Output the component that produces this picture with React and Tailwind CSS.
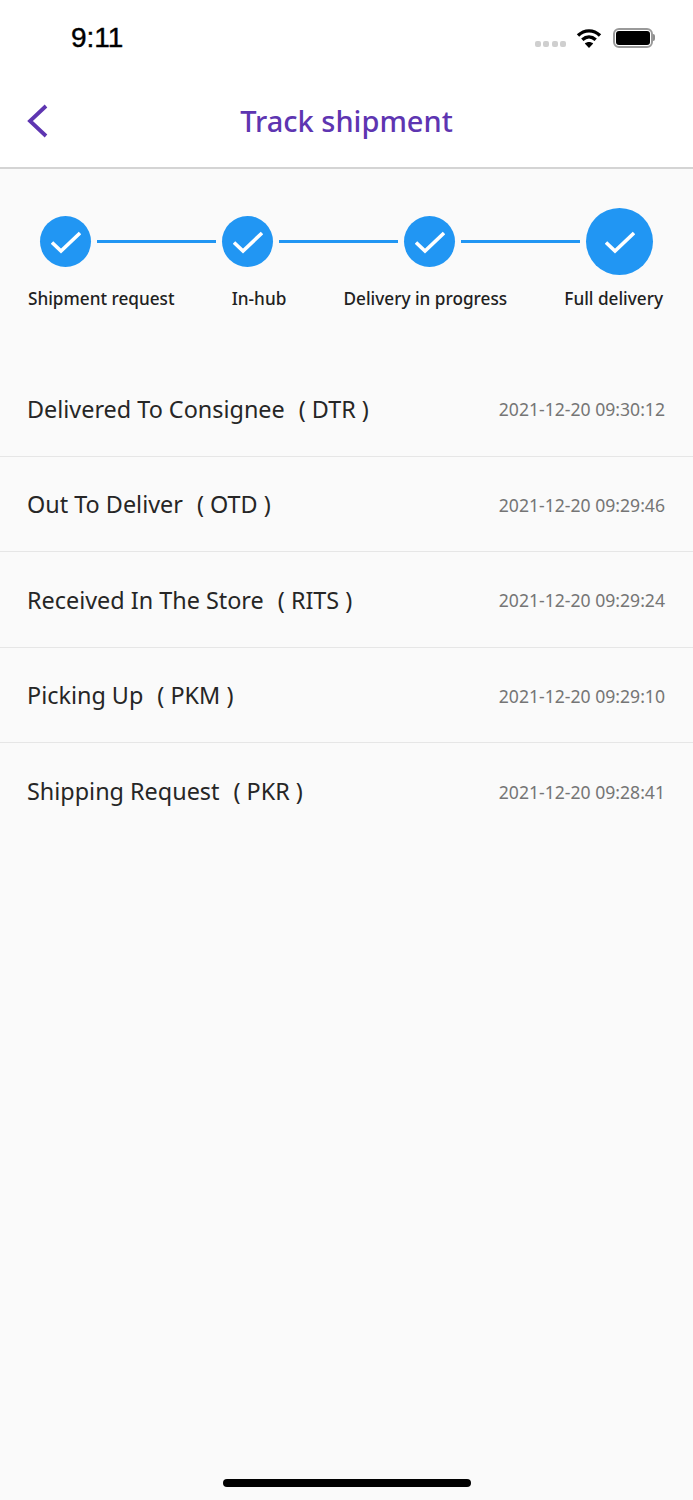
import { Fragment } from "react";

const steps = ["Shipment request", "In-hub", "Delivery in progress", "Full delivery"];

const events = [
  { name: "Delivered To Consignee", code: "DTR", time: "2021-12-20 09:30:12" },
  { name: "Out To Deliver", code: "OTD", time: "2021-12-20 09:29:46" },
  { name: "Received In The Store", code: "RITS", time: "2021-12-20 09:29:24" },
  { name: "Picking Up", code: "PKM", time: "2021-12-20 09:29:10" },
  { name: "Shipping Request", code: "PKR", time: "2021-12-20 09:28:41" },
];

function Check({ big }) {
  return (
    <div
      className={
        big
          ? "flex h-[67px] w-[67px] shrink-0 items-center justify-center rounded-full bg-[#2196f3]"
          : "flex h-[51px] w-[51px] shrink-0 items-center justify-center rounded-full bg-[#2196f3]"
      }
    >
      <svg width="30" height="24" viewBox="0 0 30 24" fill="none">
        <path d="M1 12.5 L10 21 L29 3" stroke="#fff" strokeWidth="3.6" />
      </svg>
    </div>
  );
}

export default function App() {
  return (
    <div className="flex min-h-[1500px] flex-col bg-[#fafafa] font-['Noto_Sans',sans-serif]">
      <div className="flex h-[75px] items-center justify-between bg-white pl-[71px] pr-[38px]">
        <span className="font-['Liberation_Sans',sans-serif] text-[28px] font-medium text-black [-webkit-text-stroke:0.4px_black]">9:11</span>
        <div className="flex items-center">
          <div className="mt-[13px] flex gap-[2.5px]">
            <div className="h-[6px] w-[6px] rounded-[2px] bg-[#cfcfcf]" />
            <div className="h-[6px] w-[6px] rounded-[2px] bg-[#cfcfcf]" />
            <div className="h-[6px] w-[6px] rounded-[2px] bg-[#cfcfcf]" />
            <div className="h-[6px] w-[6px] rounded-[2px] bg-[#cfcfcf]" />
          </div>
          <svg className="ml-[10px]" width="26" height="22" viewBox="0 0 26 22" fill="none">
            <path d="M2 8.5 C8.5 2.3 17.5 2.3 24 8.5" stroke="#000" strokeWidth="3.4" />
            <path d="M6.3 12.8 C10.5 9 15.5 9 19.7 12.8" stroke="#000" strokeWidth="3.4" />
            <path d="M13 21 L8.8 16.6 C11.2 14.6 14.8 14.6 17.2 16.6 Z" fill="#000" />
          </svg>
          <div className="ml-[11px] flex items-center">
            <div className="flex h-[20px] w-[40px] items-center justify-center rounded-[6px] border-2 border-[#9a9a9a]">
              <div className="h-[14px] w-[34px] rounded-[3px] bg-black" />
            </div>
            <div className="h-[7px] w-[2px] rounded-r-full bg-[#8e8e8e]" />
          </div>
        </div>
      </div>

      <header className="relative flex h-[94px] items-center justify-center border-b-2 border-[#d4d4d4] bg-white">
        <svg className="absolute left-[26px] top-[29px]" width="22" height="34" viewBox="0 0 22 34" fill="none">
          <path d="M20 2 L4 17 L20 32" stroke="#5e35b1" strokeWidth="3.8" />
        </svg>
        <h1 className="mb-[2px] text-[29px] font-medium leading-none text-[#5e35b1]">Track shipment</h1>
      </header>

      <div className="flex h-[145px] items-center gap-[6px] pl-[40px]">
        {steps.map((step, i) => (
          <Fragment key={step}>
            <Check big={i === 3} />
            {i < 3 && <div className="h-[3px] w-[119px] bg-[#2196f3]" />}
          </Fragment>
        ))}
      </div>

      <div className="-mt-[28px] flex justify-between pl-[28px] pr-[30px]">
        {steps.map((step) => (
          <span key={step} className="text-[17.2px] font-medium leading-[26px] text-[#212121]">
            {step}
          </span>
        ))}
      </div>

      <ul className="mt-[49px]">
        {events.map((e, i) => (
          <li
            key={e.code}
            className={
              i < events.length - 1
                ? "flex h-[95.5px] items-center justify-between border-b border-[#e6e6e6] pl-[27px] pr-[28px] pt-[2px]"
                : "flex h-[95.5px] items-center justify-between pl-[27px] pr-[28px] pt-[2px]"
            }
          >
            <span className="text-[23.4px] text-[#262626]">
              {e.name}
              <span className="ml-[14px]">( {e.code} )</span>
            </span>
            <span className="text-[17.6px] text-[#757575]">{e.time}</span>
          </li>
        ))}
      </ul>

      <div className="mt-auto flex justify-center pb-[13px]">
        <div className="h-[8px] w-[248px] rounded-full bg-black" />
      </div>
    </div>
  );
}
